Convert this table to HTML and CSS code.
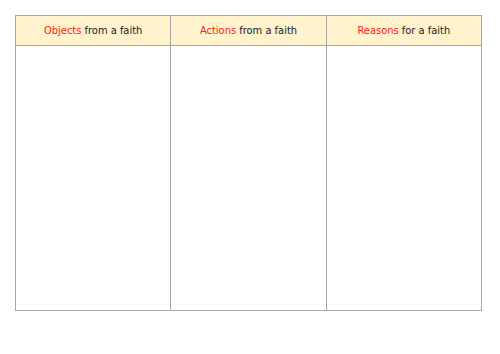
FILE: index.html
```html
<!DOCTYPE html>
<html>
<head>
<meta charset="utf-8">
<link rel="stylesheet" href="styles.css">
</head>
<body>
<table class="grid">
  <thead>
    <tr>
      <th><span class="key">Objects</span> from a faith</th>
      <th><span class="key">Actions</span> from a faith</th>
      <th><span class="key">Reasons</span> for a faith</th>
    </tr>
  </thead>
  <tbody>
    <tr>
      <td></td>
      <td></td>
      <td></td>
    </tr>
  </tbody>
</table>
</body>
</html>
```
FILE: styles.css
```css
html, body {
  margin: 0;
  padding: 0;
  background: #ffffff;
}
body {
  padding: 15px 0 0 15px;
  font-family: "DejaVu Sans Condensed", "DejaVu Sans", sans-serif;
}
.grid {
  border-collapse: collapse;
  table-layout: fixed;
  width: 467px;
}
.grid th, .grid td {
  border: 1px solid #a6a6a6;
  padding: 0;
}
.grid th {
  background: #fff2cc;
  height: 28px;
  font-weight: normal;
  font-size: 11px;
  color: #1a1a1a;
  text-align: center;
  vertical-align: middle;
  padding-bottom: 1px;
}
.grid td {
  height: 264px;
}
.key {
  color: #ff1a1a;
}
```
